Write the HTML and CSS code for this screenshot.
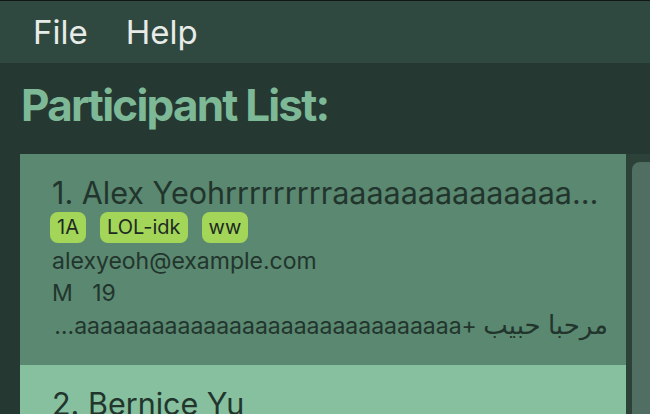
FILE: index.html
```
<!DOCTYPE html>
<html>
<head>
<meta charset="utf-8">
<link rel="stylesheet" href="styles.css">
</head>
<body>
<div class="app">
  <div class="menubar">
    <span class="menu-item menu-file">File</span>
    <span class="menu-item menu-help">Help</span>
  </div>
  <h1 class="title">Participant List:</h1>
  <div class="list">
    <div class="cards">
      <div class="card card-selected">
        <div class="name">1. Alex Yeohrrrrrrrrraaaaaaaaaaaaaaaaaaaaaaaaaaaaaaaaaaaaaaaaaaa</div>
        <div class="tags">
          <span class="tag">1A</span>
          <span class="tag">LOL-idk</span>
          <span class="tag">ww</span>
        </div>
        <div class="line">alexyeoh@example.com</div>
        <div class="line">M&nbsp;&nbsp;&nbsp;19</div>
        <div class="line line-rtl" dir="rtl"><span class="arabic">مرحبا حبيب</span> +aaaaaaaaaaaaaaaaaaaaaaaaaaaaaaaaaaaaaaaaaaaaaaaaaaaaaaaaaaaaaa</div>
      </div>
      <div class="card card-plain">
        <div class="name">2. Bernice Yu</div>
      </div>
    </div>
    <div class="scroll-track">
      <div class="scroll-thumb"></div>
    </div>
  </div>
</div>
</body>
</html>
```
FILE: styles.css
```
html, body {
  margin: 0;
  padding: 0;
  width: 650px;
  height: 414px;
  overflow: hidden;
  background: #263832;
  font-family: Inter, "Noto Sans", "DejaVu Sans", sans-serif;
}

.app {
  display: flex;
  flex-direction: column;
  height: 414px;
  border-top: 1px solid #101613;
  box-sizing: border-box;
}

.menubar {
  height: 62px;
  background: #304940;
  display: flex;
  align-items: center;
  flex-shrink: 0;
}

.menu-item {
  color: #e8ece9;
  font-size: 33px;
  line-height: 40px;
}

.menu-file {
  margin-left: 33px;
}

.menu-help {
  margin-left: 38px;
}

.title {
  margin: 16px 0 23px 21px;
  font-size: 44px;
  line-height: 52px;
  font-weight: 700;
  color: #7db996;
  letter-spacing: -1.8px;
}

.list {
  flex: 1;
  display: flex;
  margin-left: 20px;
  overflow: hidden;
}

.cards {
  width: 606px;
  flex-shrink: 0;
  display: flex;
  flex-direction: column;
}

.card {
  padding: 21px 18px 23px 30px;
  color: #22352d;
  flex-shrink: 0;
}

.card-selected {
  background: #5a8870;
}

.card-plain {
  background: #86c09e;
  flex: 1;
}

.name {
  font-size: 30.5px;
  line-height: 36px;
  white-space: nowrap;
  overflow: hidden;
  text-overflow: ellipsis;
  padding-left: 2px;
}

.tags {
  display: flex;
  gap: 14px;
  margin-top: 1px;
  margin-bottom: 2px;
}

.tag {
  background: #a3d658;
  color: #1d2b24;
  font-size: 20px;
  line-height: 31px;
  height: 31px;
  padding: 0 7px;
  border-radius: 8px;
}

.line {
  font-size: 23px;
  line-height: 32px;
  white-space: nowrap;
  overflow: hidden;
  text-overflow: ellipsis;
  padding-left: 2px;
}

.line-rtl {
  direction: rtl;
  text-align: right;
  padding-left: 0;
}

.arabic {
  font-size: 26px;
  line-height: 32px;
}

.scroll-track {
  flex: 1;
  background: #2c4238;
  padding-left: 6px;
  display: flex;
}

.scroll-thumb {
  flex: 1;
  margin-top: 8px;
  background: #506e62;
  border-radius: 8px 0 0 0;
}
```
